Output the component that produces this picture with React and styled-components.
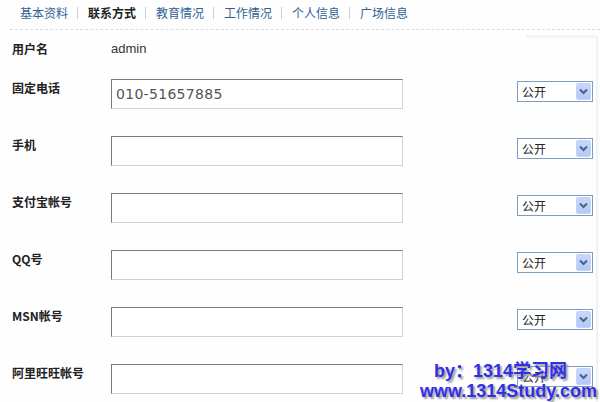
import React from 'react';
import styled, { createGlobalStyle } from 'styled-components';

const GlobalStyle = createGlobalStyle`
  html, body {
    margin: 0;
    padding: 0;
    background: #fefefe;
    font-family: "Noto Sans CJK SC", "DejaVu Sans", sans-serif;
  }
`;

const tabs = ['基本资料', '联系方式', '教育情况', '工作情况', '个人信息', '广场信息'];

const fields = [
  { label: '固定电话', value: '010-51657885' },
  { label: '手机', value: '' },
  { label: '支付宝帐号', value: '' },
  { label: 'QQ号', value: '' },
  { label: 'MSN帐号', value: '' },
  { label: '阿里旺旺帐号', value: '' }
];

const Page = styled.div`
  position: relative;
  width: 600px;
  height: 402px;
  overflow: hidden;
`;

const TabBar = styled.div`
  display: flex;
  align-items: center;
  height: 29px;
  padding-left: 20px;
  box-sizing: border-box;
  font-size: 12px;
`;

const Tab = styled.a`
  color: ${p => (p.$active ? '#222' : '#2f5f93')};
  font-weight: ${p => (p.$active ? 'bold' : 'normal')};
  text-decoration: none;
  line-height: 14px;
  padding-bottom: 4px;
`;

const Sep = styled.span`
  width: 1px;
  height: 12px;
  margin: 0 10px 4px 9px;
  background: #cfcfcf;
`;

const Divider = styled.div`
  margin-left: 10px;
  border-top: 1px dashed #dcdcdc;
`;

const Form = styled.div`
  position: relative;
  padding-left: 12px;

  &::before {
    content: '';
    position: absolute;
    left: 526px;
    top: 5px;
    right: 2px;
    bottom: 0;
    border-top: 3px solid #f4f4f4;
    border-right: 2px solid #f2f2f2;
    pointer-events: none;
  }
`;

const UserRow = styled.div`
  display: flex;
  align-items: flex-start;
  height: 49px;
  padding-top: 12px;
  box-sizing: border-box;
`;

const Label = styled.div`
  width: 99px;
  font-size: 12px;
  line-height: 14px;
  font-weight: bold;
  color: #222;
  padding-top: ${p => (p.$top ? '2px' : '0')};
`;

const UserValue = styled.div`
  font-family: "Liberation Sans", Arial, sans-serif;
  font-size: 13px;
  line-height: 14px;
  color: #333;
`;

const Row = styled.div`
  display: grid;
  grid-template-columns: 99px 292px 1fr 76px;
  align-items: start;
  height: 57px;
  padding-right: 7px;
`;

const Input = styled.div`
  height: 30px;
  box-sizing: border-box;
  border-style: solid;
  border-width: 1px;
  border-color: #7a7a7a #d2d2d2 #d2d2d2 #7a7a7a;
  background: #fff;
  padding: 0 4px;
  display: flex;
  align-items: center;
  font-family: "DejaVu Sans", sans-serif;
  font-size: 14px;
  letter-spacing: 0.3px;
  color: #555;
`;

const Select = styled.div`
  grid-column: 4;
  margin-top: 2px;
  height: 21px;
  box-sizing: border-box;
  border: 1px solid #7f9db9;
  background: #fff;
  display: flex;
  align-items: center;
  justify-content: space-between;
  padding: 0 1px 0 4px;
  font-size: 12px;
  color: #222;
`;

const DropBtn = styled.div`
  width: 15px;
  height: 17px;
  box-sizing: border-box;
  border: 1px solid #c3d3fd;
  border-radius: 2px;
  background: linear-gradient(#c7d7fc, #b4c9f6);
  display: flex;
  align-items: center;
  justify-content: center;
`;

const Watermark = styled.div`
  position: absolute;
  right: 3px;
  bottom: 1px;
  text-align: right;
  font-family: "Liberation Sans", "Noto Sans CJK SC", Arial, sans-serif;
  font-weight: bold;
  color: #3030e6;
  text-shadow: 2px 2px 2px #9a9a9a;
  line-height: 20px;
  pointer-events: none;
`;

const MarkLine = styled.div`
  font-size: ${p => p.$size}px;
  padding-right: ${p => p.$pr || 0}px;
`;

const Chevron = () => (
  <svg width="9" height="7" viewBox="0 0 9 7">
    <path d="M1 1.5 L4.5 5 L8 1.5" fill="none" stroke="#4d6185" strokeWidth="2" />
  </svg>
);

export default function App() {
  return (
    <Page>
      <GlobalStyle />
      <TabBar>
        {tabs.map((t, i) => (
          <React.Fragment key={t}>
            {i > 0 && <Sep />}
            <Tab href="#" $active={i === 1}>{t}</Tab>
          </React.Fragment>
        ))}
      </TabBar>
      <Divider />
      <Form>
        <UserRow>
          <Label>用户名</Label>
          <UserValue>admin</UserValue>
        </UserRow>
        {fields.map(f => (
          <Row key={f.label}>
            <Label $top>{f.label}</Label>
            <Input>{f.value}</Input>
            <Select>
              <span>公开</span>
              <DropBtn><Chevron /></DropBtn>
            </Select>
          </Row>
        ))}
      </Form>
      <Watermark>
        <MarkLine $size={18} $pr={30}>by：1314学习网</MarkLine>
        <MarkLine $size={18}>www.1314Study.com</MarkLine>
      </Watermark>
    </Page>
  );
}
